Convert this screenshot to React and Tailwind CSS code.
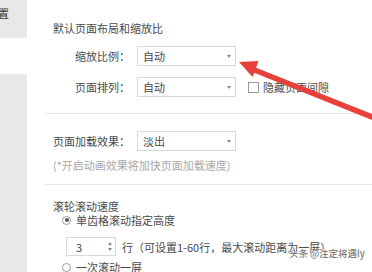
import React from "react";

const font = { fontFamily: '"Noto Sans CJK SC", "Noto Sans", sans-serif' };

const Select = ({ value }) => (
  <div className="flex items-center justify-between w-[99px] h-[20px] border border-[#d9d9d9] bg-white pl-[5px] pr-[4px]">
    <span className="text-[11px] leading-[14px] text-[#4a4a4a]">{value}</span>
    <span className="w-0 h-0 border-x-[2.5px] border-t-[3px] border-x-transparent border-t-[#888]" />
  </div>
);

const Row = ({ label, value, children }) => (
  <div className="flex items-center h-[20px]">
    <div className="w-[77px] text-right text-[11px] leading-[14px] text-[#4a4a4a] whitespace-nowrap">{label}</div>
    <div className="ml-[7px]">
      <Select value={value} />
    </div>
    {children}
  </div>
);

const Radio = ({ checked, label }) => (
  <div className="flex items-center h-[14px] ml-[9px]">
    <span className="w-[9px] h-[9px] rounded-full border border-[#9a9a9a] bg-white flex items-center justify-center">
      {checked && <span className="w-[4px] h-[4px] rounded-full bg-[#555]" />}
    </span>
    <span className="ml-[5px] text-[11px] leading-[14px] text-[#4a4a4a] whitespace-nowrap">{label}</span>
  </div>
);

const App = () => {
  return (
    <div className="relative w-[372px] h-[272px] overflow-hidden bg-white flex" style={font}>
      {/* sidebar */}
      <div className="w-[27px] flex flex-col shrink-0">
        <div className="h-[38px] bg-[#e8e8e8] overflow-hidden">
          <div className="flex justify-end pt-[6px] pr-[18px]">
            <span className="shrink-0 text-[11px] leading-[14px] text-[#333] whitespace-nowrap">设置</span>
          </div>
        </div>
        <div className="h-[36px] bg-white" />
        <div className="flex-1 bg-[#e8e8e8]" />
      </div>

      {/* content */}
      <div className="flex-1 pl-[26px] pt-[20px]">
        <div className="h-[16px] text-[11px] leading-[16px] text-[#4a4a4a]">默认页面布局和缩放比</div>

        <div className="mt-[10px]">
          <Row label="缩放比例：" value="自动" />
        </div>
        <div className="mt-[11px]">
          <Row label="页面排列：" value="自动">
            <span className="ml-[12px] w-[11px] h-[11px] border border-[#9a9a9a] bg-white" />
            <span className="ml-[4px] text-[11px] leading-[14px] text-[#4a4a4a] whitespace-nowrap">隐藏页面间隙</span>
          </Row>
        </div>

        <div className="mt-[16px] -ml-[8px] h-px bg-[#e6e6e6]" />

        <div className="mt-[17px]">
          <Row label="页面加载效果：" value="淡出" />
        </div>
        <div className="mt-[6px] text-[11px] leading-[16px] text-[#a8a8a8] whitespace-nowrap">(*开启动画效果将加快页面加载速度)</div>

        <div className="mt-[11px] -ml-[8px] h-px bg-[#e6e6e6]" />

        <div className="mt-[14px] h-[14px] text-[11px] leading-[14px] text-[#4a4a4a]">滚轮滚动速度</div>
        <Radio checked label="单齿格滚动指定高度" />

        <div className="mt-[10px] ml-[13px] flex items-center h-[19px]">
          <div className="flex items-center justify-between w-[50px] h-[19px] border border-[#d9d9d9] bg-white pl-[9px] pr-[3px]">
            <span className="text-[11px] leading-[14px] text-[#4a4a4a]">3</span>
            <span className="flex flex-col items-center gap-[3px]">
              <span className="w-0 h-0 border-x-[2px] border-b-[3px] border-x-transparent border-b-[#888]" />
              <span className="w-0 h-0 border-x-[2px] border-t-[3px] border-x-transparent border-t-[#888]" />
            </span>
          </div>
          <span className="ml-[6px] text-[11px] leading-[14px] text-[#4a4a4a]">行</span>
          <span className="text-[11px] leading-[14px] text-[#4a4a4a] whitespace-nowrap">（可设置1-60行，最大滚动距离为一屏）</span>
        </div>

        <div className="mt-[4px]">
          <Radio label="一次滚动一屏" />
        </div>
      </div>

      {/* red arrow annotation */}
      <svg className="absolute inset-0 pointer-events-none" width="372" height="272" viewBox="0 0 372 272">
        <polygon points="239,62 258.5,61 252.5,77" fill="#e8403a" />
        <polygon points="253,66.5 251,71.5 372,120 372,114" fill="#e8403a" />
      </svg>

      {/* watermark */}
      <div
        className="absolute left-[289px] top-[247px] text-[9.5px] leading-[12px] text-[#666] whitespace-nowrap"
        style={{ textShadow: "0 0 2px #fff, 0 0 2px #fff, 0 0 1px #fff" }}
      >
        头条 @注定将遇ly
      </div>
    </div>
  );
};

export default App;
